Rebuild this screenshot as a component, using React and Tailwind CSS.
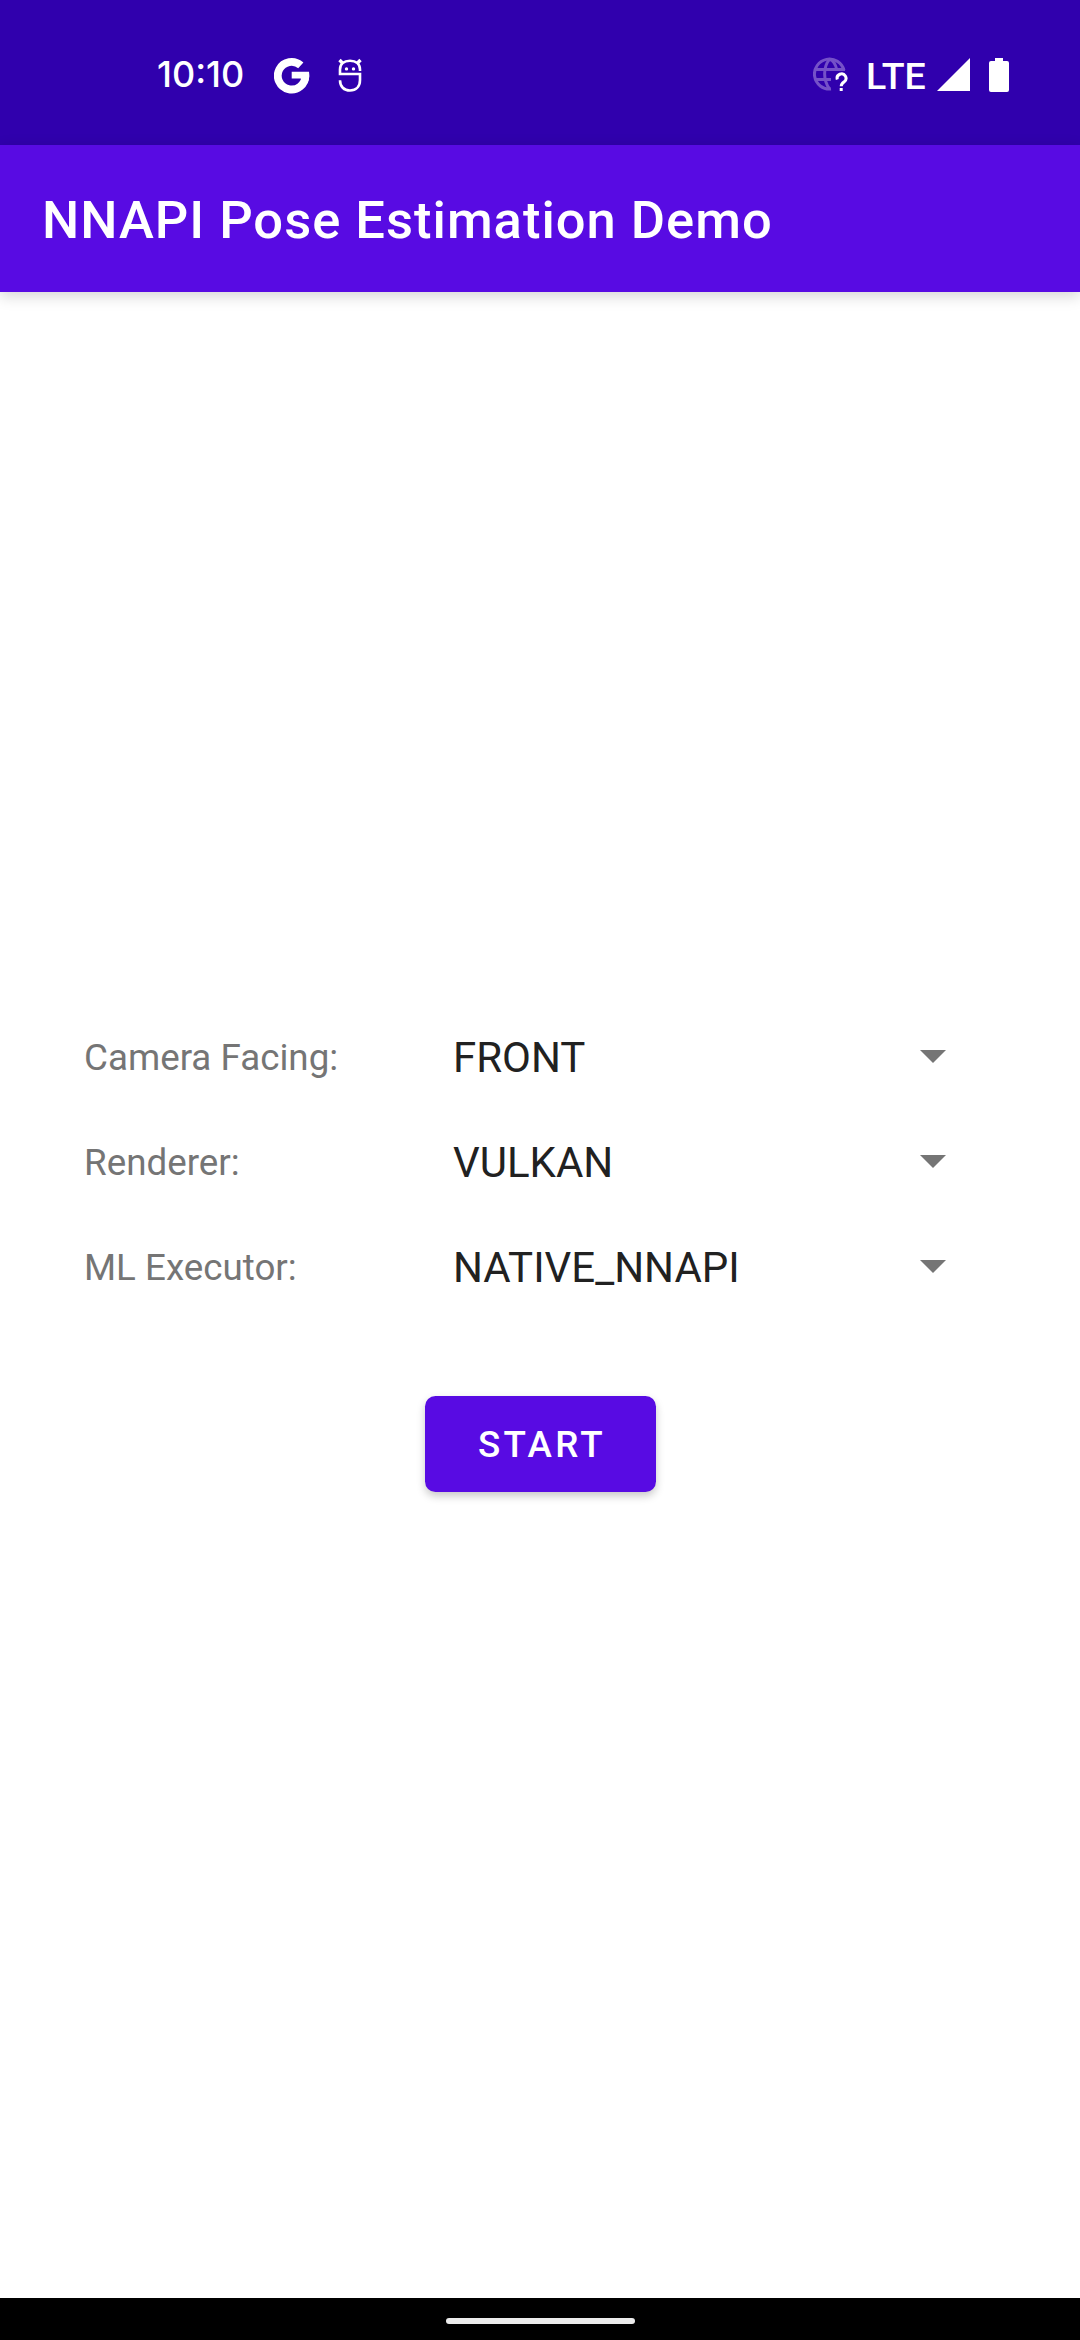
const ROWS = [
  ["Camera Facing:", "FRONT"],
  ["Renderer:", "VULKAN"],
  ["ML Executor:", "NATIVE_NNAPI"],
];

function GoogleIcon() {
  return (
    <svg className="ml-[30px] block" width="36" height="38" viewBox="0 0 36 38" fill="none">
      <path d="M26.8 9.4A13.8 13.8 0 1 0 31.4 19.5" stroke="#fff" strokeWidth="7.8" />
      <path d="M17.7 15.8H35C35.8 20 35 24 33 27.5L26.5 22.6H17.7Z" fill="#fff" />
    </svg>
  );
}

function BugIcon() {
  return (
    <svg className="ml-[28px] block" width="24" height="36" viewBox="0 0 24 36" fill="none" stroke="#fff" strokeWidth="2.6">
      <path d="M1.5 3L5 6.5M22.5 3L19 6.5" strokeWidth="3.4" />
      <path d="M22 14V12.5C22 7 18 3.7 12 3.7S2 7 2 12.5V17H22V23C22 29.5 18 33.5 12 33.5S2 29.5 2 23.3" />
      <circle cx="8.5" cy="11.9" r="1.7" fill="#fff" stroke="none" />
      <circle cx="15.5" cy="11.9" r="1.7" fill="#fff" stroke="none" />
    </svg>
  );
}

function GlobeIcon() {
  return (
    <svg className="block" width="36" height="36" viewBox="0 0 36 36" fill="none">
      <g stroke="#7551c8" strokeWidth="3">
        <path d="M31 13.4A15 15 0 1 0 18 32" />
        <path d="M24 13.4C22.5 7 19.5 3 16.5 2.4C10 10 10 23 16.5 31.9" />
        <path d="M3 12.4H32M3 22.4H18" />
      </g>
      <path d="M24.3 22.5A4.4 4.4 0 1 1 31.2 24.8C29.2 26.2 28.2 27 28.2 29.3" stroke="#fff" strokeWidth="3" />
      <rect x="26.7" y="31" width="3" height="3" fill="#fff" />
    </svg>
  );
}

export default function App() {
  return (
    <div className="flex h-[2340px] w-[1080px] flex-col bg-white font-['Roboto',sans-serif]">
      <div className="flex h-[145px] shrink-0 items-center justify-between bg-[#3000ad] pr-[71px] pl-[157px] text-white">
        <div className="flex items-center pt-[5px]">
          <span className="w-[87px] pb-[2px] text-[36px] leading-[36px] font-medium whitespace-nowrap font-['Inter',sans-serif]">10:10</span>
          <GoogleIcon />
          <BugIcon />
        </div>
        <div className="flex items-center pt-[5px]">
          <GlobeIcon />
          <span className="ml-[17px] w-[60px] pt-[2px] text-[37.5px] leading-[36px] font-medium">LTE</span>
          <svg className="mb-[2px] ml-[11px] block" width="33" height="33" viewBox="0 0 33 33"><path d="M33 0V33H0Z" fill="#fff" /></svg>
          <svg className="ml-[19px] block" width="20" height="34" viewBox="0 0 20 34"><path d="M6 0H14V3H18Q20 3 20 5V32Q20 34 18 34H2Q0 34 0 32V5Q0 3 2 3H6Z" fill="#fff" /></svg>
        </div>
      </div>
      <header className="flex h-[147px] shrink-0 items-center bg-[#580be3] pt-[2px] pl-[42px] text-white shadow-[0_4px_14px_rgba(0,0,0,0.17)]">
        <h1 className="text-[52.5px] leading-[62px] font-medium tracking-[1px]">NNAPI Pose Estimation Demo</h1>
      </header>
      <main className="flex flex-1 flex-col items-center pt-[712px]">
        <div className="w-full">
          {ROWS.map(([label, value]) => (
            <div key={label} className="flex h-[105px] items-center pl-[84px]">
              <span className="w-[369px] pt-[2px] text-[36.75px] leading-[44px] text-[#757575]">{label}</span>
              <span className="w-[467px] pt-[2px] text-[42px] leading-[50px] text-[#212121]">{value}</span>
              <svg className="block" width="26" height="13" viewBox="0 0 26 13"><path d="M0 0H26L13 13Z" fill="#757575" /></svg>
            </div>
          ))}
        </div>
        <button className="mt-[77px] h-[96px] w-[231px] rounded-[10.5px] bg-[#580be3] pt-[2px] pl-[4px] text-[36.75px] font-medium tracking-[0.0893em] text-white shadow-[0_4px_8px_rgba(0,0,0,0.22)]">START</button>
      </main>
      <footer className="flex h-[42px] shrink-0 justify-center bg-black pt-[20px]">
        <div className="h-[6px] w-[189px] rounded-full bg-[#ebebeb]" />
      </footer>
    </div>
  );
}
